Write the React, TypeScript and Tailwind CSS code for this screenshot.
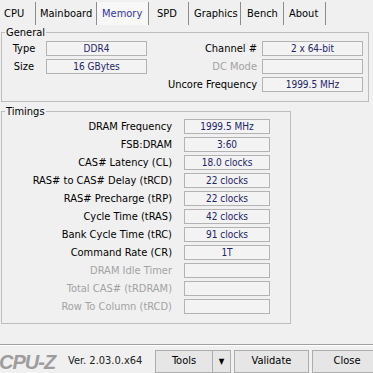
import React from "react";

interface Tab {
  name: string;
  width: string;
  pad: string;
  active?: boolean;
}

interface Timing {
  label: string;
  value: string;
  disabled?: boolean;
}

const tabs: Tab[] = [
  { name: "CPU", width: "w-[36px]", pad: "pl-[4px]" },
  { name: "Mainboard", width: "w-[61px]", pad: "pl-[4px]" },
  { name: "Memory", width: "w-[52px]", pad: "pl-[5px]", active: true },
  { name: "SPD", width: "w-[40px]", pad: "pl-[8px]" },
  { name: "Graphics", width: "w-[52px]", pad: "pl-[5px]" },
  { name: "Bench", width: "w-[43px]", pad: "pl-[6px]" },
  { name: "About", width: "w-[42px]", pad: "pl-[5px]" },
];

const timings: Timing[] = [
  { label: "DRAM Frequency", value: "1999.5 MHz" },
  { label: "FSB:DRAM", value: "3:60" },
  { label: "CAS# Latency (CL)", value: "18.0 clocks" },
  { label: "RAS# to CAS# Delay (tRCD)", value: "22 clocks" },
  { label: "RAS# Precharge (tRP)", value: "22 clocks" },
  { label: "Cycle Time (tRAS)", value: "42 clocks" },
  { label: "Bank Cycle Time (tRC)", value: "91 clocks" },
  { label: "Command Rate (CR)", value: "1T" },
  { label: "DRAM Idle Timer", value: "", disabled: true },
  { label: "Total CAS# (tRDRAM)", value: "", disabled: true },
  { label: "Row To Column (tRCD)", value: "", disabled: true },
];

// boxed read-only field like the win32 edit controls
const Field = ({ value, width }: { value: string; width: string }) => (
  <div
    className={`${width} h-[15px] shrink-0 border border-[#b3b3b3] bg-[#f3f3f3] text-center text-[10px] leading-[13px] text-[#23236b]`}
  >
    {value}
  </div>
);

const Legend = ({ text }: { text: string }) => (
  <span className="-mt-[7px] ml-[3px] w-fit bg-[#f0f0f0] px-[1px] text-[11px] leading-[13px] text-black">
    {text}
  </span>
);

const App = () => {
  return (
    <div
      className="flex h-[373px] w-[373px] flex-col overflow-hidden bg-[#f0f0f0] text-[11px] text-black"
      style={{ fontFamily: '"DejaVu Sans Condensed", "DejaVu Sans", sans-serif' }}
    >
      {/* tab strip */}
      <div className="flex h-[25px] shrink-0">
        {tabs.map((tab) => (
          <div
            key={tab.name}
            className={`${tab.width} ${tab.pad} mt-[2px] flex items-center border-r border-[#8c8c8c] leading-[13px] ${
              tab.active ? "bg-[#f8f8f8] text-[#3232a8]" : ""
            }`}
          >
            {tab.name}
          </div>
        ))}
      </div>

      {/* General */}
      <div className="ml-[1px] mt-[7px] flex h-[70px] w-[368px] shrink-0 flex-col border border-[#bdbdbd]">
        <Legend text="General" />
        <div className="mt-[2px] flex flex-col gap-[3px]">
          <div className="flex h-[15px] items-center">
            <span className="w-[44px] text-center leading-[15px]">Type</span>
            <Field value="DDR4" width="w-[101px]" />
            <span className="flex-1 pr-[5px] text-right leading-[15px]">Channel #</span>
            <Field value="2 x 64-bit" width="w-[101px]" />
            <div className="w-[5px]" />
          </div>
          <div className="flex h-[15px] items-center">
            <span className="w-[44px] text-center leading-[15px]">Size</span>
            <Field value="16 GBytes" width="w-[101px]" />
            <span className="flex-1 pr-[5px] text-right leading-[15px] text-[#a3a3a3]">DC Mode</span>
            <Field value="" width="w-[101px]" />
            <div className="w-[5px]" />
          </div>
          <div className="flex h-[15px] items-center">
            <span className="flex-1 pr-[5px] text-right leading-[15px]">Uncore Frequency</span>
            <Field value="1999.5 MHz" width="w-[101px]" />
            <div className="w-[5px]" />
          </div>
        </div>
      </div>

      {/* Timings */}
      <div className="ml-[1px] mt-[9px] flex h-[213px] w-[290px] shrink-0 flex-col border border-[#bdbdbd]">
        <Legend text="Timings" />
        <div className="mt-[1px] flex flex-col gap-[3px]">
          {timings.map((t) => (
            <div key={t.label} className="flex h-[15px] items-center">
              <span
                className={`w-[170px] text-right leading-[15px] ${t.disabled ? "text-[#a3a3a3]" : ""}`}
              >
                {t.label}
              </span>
              <div className="w-[12px]" />
              <Field value={t.value} width="w-[86px]" />
            </div>
          ))}
        </div>
      </div>

      {/* separator */}
      <div className="mt-[20px] h-[2px] shrink-0 border-t border-b border-t-[#a0a0a0] border-b-white" />

      {/* bottom bar */}
      <div className="mt-[4px] flex h-[23px] shrink-0 items-center">
        <div className="w-[68px] shrink-0">
          <span
            className="-ml-[1px] text-[20px] font-bold italic tracking-[-1px] text-[#9d9d9d]"
            style={{ fontFamily: '"Liberation Sans", Arial, sans-serif' }}
          >
            CPU-Z
          </span>
        </div>
        <span className="w-[87px] shrink-0 text-[11px] text-[#222]">Ver. 2.03.0.x64</span>
        <div className="flex h-[23px] w-[76px] shrink-0 border border-[#adadad] bg-[#e6e6e6]">
          <span className="flex w-[57px] items-center justify-center border-r border-[#adadad]">Tools</span>
          <span className="flex flex-1 items-center justify-center text-[8px]">▼</span>
        </div>
        <div className="ml-[3px] flex h-[23px] w-[75px] shrink-0 items-center justify-center border border-[#adadad] bg-[#e6e6e6]">
          Validate
        </div>
        <div className="ml-[3px] flex h-[23px] w-[70px] shrink-0 items-center justify-center border border-[#adadad] bg-[#e6e6e6]">
          Close
        </div>
      </div>
    </div>
  );
};

export default App;
